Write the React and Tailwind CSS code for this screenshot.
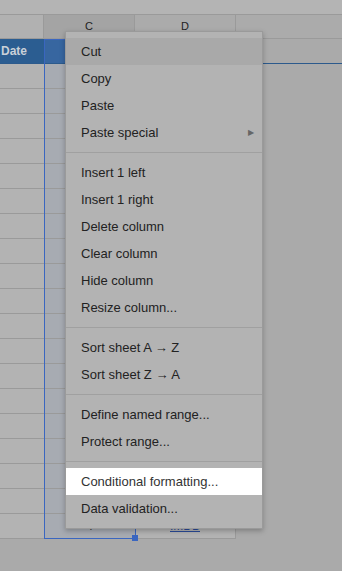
import React from 'react';

const rows = Array.from({ length: 19 });

const menuGroups = [
    [
        { label: 'Cut', active: true },
        { label: 'Copy' },
        { label: 'Paste' },
        { label: 'Paste special', sub: true },
    ],
    [
        { label: 'Insert 1 left' },
        { label: 'Insert 1 right' },
        { label: 'Delete column' },
        { label: 'Clear column' },
        { label: 'Hide column' },
        { label: 'Resize column...' },
    ],
    [
        { label: 'Sort sheet A \u2192 Z' },
        { label: 'Sort sheet Z \u2192 A' },
    ],
    [
        { label: 'Define named range...' },
        { label: 'Protect range...' },
    ],
    [
        { label: 'Conditional formatting...', spot: true },
        { label: 'Data validation...' },
    ],
];

const ContextMenu = () => (
    <div className="absolute left-[65px] top-[31px] w-[198px] bg-[#b3b3b3] border border-[#9a9a9a] py-[6px] shadow-[0_2px_5px_rgba(0,0,0,0.25)]">
        {menuGroups.map((group, gi) => (
            <div key={gi} className={gi > 0 ? 'border-t border-[#a0a0a0] mt-[6px] pt-[6px]' : ''}>
                {group.map((item) => (
                    <div
                        key={item.label}
                        className={`h-[27px] flex items-center justify-between pl-[15px] pr-[8px] text-[13px] ${
                            item.spot ? 'bg-white text-[#333]' : item.active ? 'bg-[#a9a9a9] text-[#222]' : 'text-[#222]'
                        }`}
                    >
                        <span>{item.label}</span>
                        {item.sub && <span className="text-[8px] text-[#666]">&#9654;</span>}
                    </div>
                ))}
            </div>
        ))}
    </div>
);

export default function App() {
    return (
        <div className="relative w-[342px] h-[571px] overflow-hidden bg-[#aaaaaa] font-['Liberation_Sans',Arial,sans-serif]">
            {/* top toolbar strip */}
            <div className="h-[15px] bg-[#b4b4b4] border-b border-[#9a9a9a]" />

            {/* column headers */}
            <div className="flex h-[24px] border-b border-[#9a9a9a] text-[11px] text-[#222]">
                <div className="w-[44px] bg-[#b1b1b1] border-r border-[#9a9a9a]" />
                <div className="w-[91px] bg-[#a4a4a4] border-r border-[#9a9a9a] flex items-center justify-center">C</div>
                <div className="w-[101px] bg-[#ababab] border-r border-[#9a9a9a] flex items-center justify-center">D</div>
                <div className="flex-1 bg-[#ababab]" />
            </div>

            {/* header row */}
            <div className="flex h-[25px] border-b border-[#2c5a8c]">
                <div className="w-[44px] bg-[#2b5d91] flex items-center pl-[1px] text-[12px] font-bold text-[#c9d0d8]">
                    Date
                </div>
                <div className="w-[91px] bg-[#3766a0]" />
                <div className="w-[101px] bg-[#2b5d91]" />
                <div className="flex-1 bg-[#aaaaaa]" />
            </div>

            {/* body rows */}
            {rows.map((_, i) => (
                <div key={i} className="flex h-[25px]">
                    <div className="w-[44px] bg-[#b3b3b3] border-b border-[#9a9a9a]" />
                    <div className="w-[91px] bg-[#a7abb2] border-b border-[#9a9a9a] flex items-center justify-center text-[12px] text-[#333]">
                        {i === rows.length - 1 ? '4' : ''}
                    </div>
                    <div className="w-[101px] bg-[#b3b3b3] border-b border-r border-[#9a9a9a] flex items-center justify-center text-[12px]">
                        {i === rows.length - 1 ? <span className="text-[#2a4a98] underline">IMDB</span> : ''}
                    </div>
                    <div className="flex-1 bg-[#aaaaaa]" />
                </div>
            ))}

            {/* column selection */}
            <div className="absolute left-[44px] top-[39px] w-[92px] h-[500px] border border-[#3a66c0]" />
            <div className="absolute left-[132px] top-[535px] w-[6px] h-[6px] bg-[#3a66c0]" />

            <ContextMenu />
        </div>
    );
}
